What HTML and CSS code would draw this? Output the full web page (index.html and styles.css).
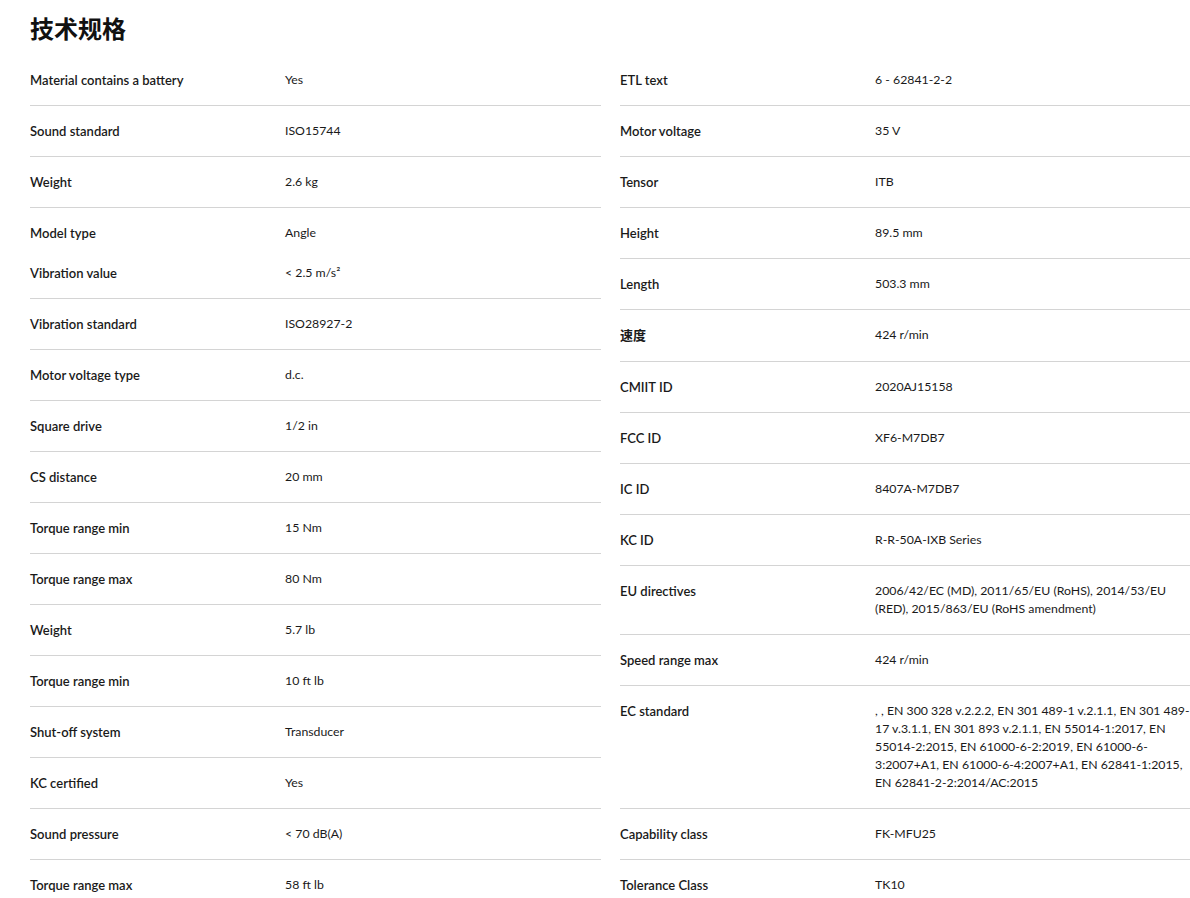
FILE: index.html
```html
<!DOCTYPE html>
<html lang="zh">
<head>
<meta charset="utf-8">
<title>技术规格</title>
<link rel="stylesheet" href="styles.css">
</head>
<body>
<main class="page">
  <h1 class="title">技术规格</h1>
  <div class="specs">
    <div class="col">
      <div class="row"><div class="label">Material contains a battery</div><div class="value">Yes</div></div>
      <div class="row"><div class="label">Sound standard</div><div class="value">ISO15744</div></div>
      <div class="row"><div class="label">Weight</div><div class="value">2.6 kg</div></div>
      <div class="row row-joined"><div class="label">Model type</div><div class="value">Angle</div></div>
      <div class="row"><div class="label">Vibration value</div><div class="value">&lt; 2.5 m/s²</div></div>
      <div class="row"><div class="label">Vibration standard</div><div class="value">ISO28927-2</div></div>
      <div class="row"><div class="label">Motor voltage type</div><div class="value">d.c.</div></div>
      <div class="row"><div class="label">Square drive</div><div class="value">1/2 in</div></div>
      <div class="row"><div class="label">CS distance</div><div class="value">20 mm</div></div>
      <div class="row"><div class="label">Torque range min</div><div class="value">15 Nm</div></div>
      <div class="row"><div class="label">Torque range max</div><div class="value">80 Nm</div></div>
      <div class="row"><div class="label">Weight</div><div class="value">5.7 lb</div></div>
      <div class="row"><div class="label">Torque range min</div><div class="value">10 ft lb</div></div>
      <div class="row"><div class="label">Shut-off system</div><div class="value">Transducer</div></div>
      <div class="row"><div class="label">KC certified</div><div class="value">Yes</div></div>
      <div class="row"><div class="label">Sound pressure</div><div class="value">&lt; 70 dB(A)</div></div>
      <div class="row"><div class="label">Torque range max</div><div class="value">58 ft lb</div></div>
    </div>
    <div class="col">
      <div class="row"><div class="label">ETL text</div><div class="value">6 - 62841-2-2</div></div>
      <div class="row"><div class="label">Motor voltage</div><div class="value">35 V</div></div>
      <div class="row"><div class="label">Tensor</div><div class="value">ITB</div></div>
      <div class="row"><div class="label">Height</div><div class="value">89.5 mm</div></div>
      <div class="row"><div class="label">Length</div><div class="value">503.3 mm</div></div>
      <div class="row row-cjk"><div class="label">速度</div><div class="value">424 r/min</div></div>
      <div class="row"><div class="label">CMIIT ID</div><div class="value">2020AJ15158</div></div>
      <div class="row"><div class="label">FCC ID</div><div class="value">XF6-M7DB7</div></div>
      <div class="row"><div class="label">IC ID</div><div class="value">8407A-M7DB7</div></div>
      <div class="row"><div class="label">KC ID</div><div class="value">R-R-50A-IXB Series</div></div>
      <div class="row"><div class="label">EU directives</div><div class="value">2006/42/EC (MD), 2011/65/EU (RoHS), 2014/53/EU (RED), 2015/863/EU (RoHS amendment)</div></div>
      <div class="row"><div class="label">Speed range max</div><div class="value">424 r/min</div></div>
      <div class="row"><div class="label">EC standard</div><div class="value">, , EN 300 328 v.2.2.2, EN 301 489-1 v.2.1.1, EN 301 489-17 v.3.1.1, EN 301 893 v.2.1.1, EN 55014-1:2017, EN 55014-2:2015, EN 61000-6-2:2019, EN 61000-6-3:2007+A1, EN 61000-6-4:2007+A1, EN 62841-1:2015, EN 62841-2-2:2014/AC:2015</div></div>
      <div class="row"><div class="label">Capability class</div><div class="value">FK-MFU25</div></div>
      <div class="row"><div class="label">Tolerance Class</div><div class="value">TK10</div></div>
    </div>
  </div>
</main>
</body>
</html>
```

FILE: styles.css
```css
html, body {
  margin: 0;
  padding: 0;
  background: #ffffff;
}

body {
  font-family: Lato, "Noto Sans CJK SC", sans-serif;
  color: #1a1a1a;
  font-size: 13px;
  line-height: 18px;
}

.page {
  padding: 10px 0 0 30px;
  width: 1160px;
}

.title {
  margin: 0;
  font-family: "Noto Sans CJK SC", sans-serif;
  font-size: 24px;
  line-height: 36px;
  font-weight: 700;
  color: #111;
}

.specs {
  display: grid;
  grid-template-columns: 571px 570px;
  column-gap: 19px;
  margin-top: 9px;
}

.col {
  display: flex;
  flex-direction: column;
}

.row {
  display: grid;
  grid-template-columns: 255px 1fr;
  padding: 16px 0;
  border-bottom: 1px solid #d4d4d4;
}

.row-joined {
  border-bottom: none;
  padding-bottom: 6px;
}

.row-cjk {
  padding-bottom: 17px;
}

.label {
  font-weight: 600;
}

.value {
  font-weight: 400;
  font-size: 12.3px;
}
```
